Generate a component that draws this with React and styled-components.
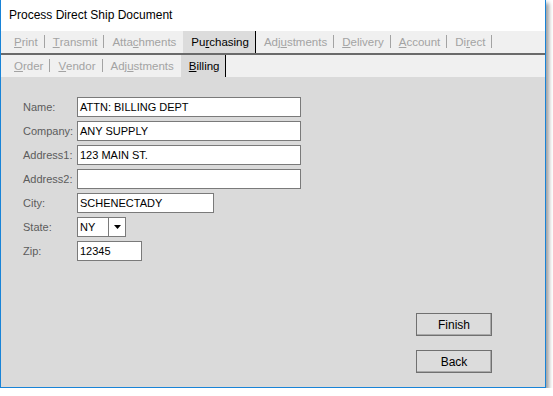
import React from "react";
import styled, { createGlobalStyle } from "styled-components";

const Global = createGlobalStyle`
  html, body { margin: 0; padding: 0; background: #ffffff; }
  * { box-sizing: border-box; }
  body { font-family: "Liberation Sans", Arial, sans-serif; }
`;

const Window = styled.div`
  width: 546px;
  height: 388px;
  border: 1px solid #1883d7;
  border-top: none;
  display: flex;
  flex-direction: column;
  background: #dadada;
  box-shadow: 3px 3px 4px rgba(0, 0, 0, 0.38);
`;

const TitleBar = styled.div`
  height: 31px;
  background: #ffffff;
  display: flex;
  align-items: center;
  padding-left: 8px;
  padding-bottom: 1px;
  font-size: 12px;
  color: #000;
`;

const TabStrip = styled.div`
  height: ${(p) => p.$h}px;
  display: flex;
  align-items: stretch;
  padding-left: 5px;
  background: #f0f0f0;
  border-bottom: ${(p) => (p.$divider ? "2px solid #6a6a6a" : "none")};
`;

const Tab = styled.div`
  position: relative;
  display: flex;
  align-items: center;
  padding: 0 6px 0 8px;
  margin-right: 1px;
  font-size: 11.5px;
  color: ${(p) => (p.$active ? "#000000" : "#a3a3a3")};
  background: ${(p) => (p.$active ? p.$activeBg : "transparent")};
  &::after {
    content: "";
    position: absolute;
    right: -1px;
    width: 1px;
    top: ${(p) => (p.$active ? "0" : "50%")};
    height: ${(p) => (p.$active ? "100%" : "13px")};
    margin-top: ${(p) => (p.$active ? "0" : "-7px")};
    background: ${(p) => (p.$active ? "#000000" : "#a3a3a3")};
    display: ${(p) => (p.$hideSep ? "none" : "block")};
  }
  u { text-decoration-thickness: 1px; text-underline-offset: 1px; }
`;

const Content = styled.div`
  flex: 1;
  display: flex;
  flex-direction: column;
  padding: 20px 53px 14px 22px;
`;

const Form = styled.div`
  display: grid;
  grid-template-columns: 54px auto;
  row-gap: 4px;
  justify-items: start;
  align-items: center;
`;

const Label = styled.label`
  font-size: 11px;
  color: #5c5c5c;
`;

const Field = styled.div`
  width: ${(p) => p.$w}px;
  height: 20px;
  border: 1px solid #7a7a7a;
  background: #ffffff;
  display: flex;
  align-items: center;
  padding-left: 2px;
  font-size: 11px;
  color: #000;
`;

const Select = styled.div`
  width: 49px;
  height: 20px;
  border: 1px solid #7a7a7a;
  background: #ffffff;
  display: flex;
  align-items: stretch;
  font-size: 11px;
  color: #000;
`;

const SelectValue = styled.div`
  flex: 1;
  display: flex;
  align-items: center;
  padding-left: 2px;
  border-right: 1px solid #7a7a7a;
`;

const SelectArrow = styled.div`
  width: 16px;
  display: flex;
  align-items: center;
  justify-content: center;
`;

const Buttons = styled.div`
  margin-top: auto;
  align-self: flex-end;
  display: flex;
  flex-direction: column;
  gap: 14px;
`;

const Button = styled.button`
  width: 76px;
  height: 23px;
  padding: 0;
  font-family: "Liberation Sans", Arial, sans-serif;
  font-size: 12px;
  color: #000;
  background: #dcdcdc;
  border: 1px solid #707070;
  box-shadow: inset -1px -1px 0 #a9a9a9;
`;

const topTabs = [
  ["P", "rint"],
  ["T", "ransmit"],
  ["Atta", "c", "hments"],
  ["Pu", "r", "chasing", true],
  ["Adj", "u", "stments"],
  ["", "D", "elivery"],
  ["", "A", "ccount"],
  ["Di", "r", "ect"],
];

const subTabs = [
  ["", "O", "rder"],
  ["", "V", "endor"],
  ["Adj", "u", "stments"],
  ["", "B", "illing", true],
];

function renderTabs(list, activeBg) {
  const norm = list.map((t) =>
    t.length === 2 ? ["", t[0], t[1], false] : [t[0], t[1], t[2], !!t[3]]
  );
  return norm.map(([pre, key, rest, active], i) => {
    const nextActive = norm[i + 1] && norm[i + 1][3];
    return (
      <Tab key={i} $active={active} $activeBg={activeBg} $hideSep={nextActive}>
        {pre}
        <u>{key}</u>
        {rest}
      </Tab>
    );
  });
}

const rows = [
  ["Name:", "ATTN: BILLING DEPT", 224],
  ["Company:", "ANY SUPPLY", 224],
  ["Address1:", "123 MAIN ST.", 224],
  ["Address2:", "", 224],
  ["City:", "SCHENECTADY", 137],
];

export default function App() {
  return (
    <>
      <Global />
      <Window>
        <TitleBar>Process Direct Ship Document</TitleBar>
        <TabStrip $h={24} $divider>
          {renderTabs(topTabs, "#dcdcdc")}
        </TabStrip>
        <TabStrip $h={22}>{renderTabs(subTabs, "#dadada")}</TabStrip>
        <Content>
          <Form>
            {rows.map(([l, v, w]) => (
              <React.Fragment key={l}>
                <Label>{l}</Label>
                <Field $w={w}>{v}</Field>
              </React.Fragment>
            ))}
            <Label>State:</Label>
            <Select>
              <SelectValue>NY</SelectValue>
              <SelectArrow>
                <svg width="7" height="4" viewBox="0 0 7 4">
                  <polygon points="0,0 7,0 3.5,4" fill="#000" />
                </svg>
              </SelectArrow>
            </Select>
            <Label>Zip:</Label>
            <Field $w={65}>12345</Field>
          </Form>
          <Buttons>
            <Button>Finish</Button>
            <Button>Back</Button>
          </Buttons>
        </Content>
      </Window>
    </>
  );
}
